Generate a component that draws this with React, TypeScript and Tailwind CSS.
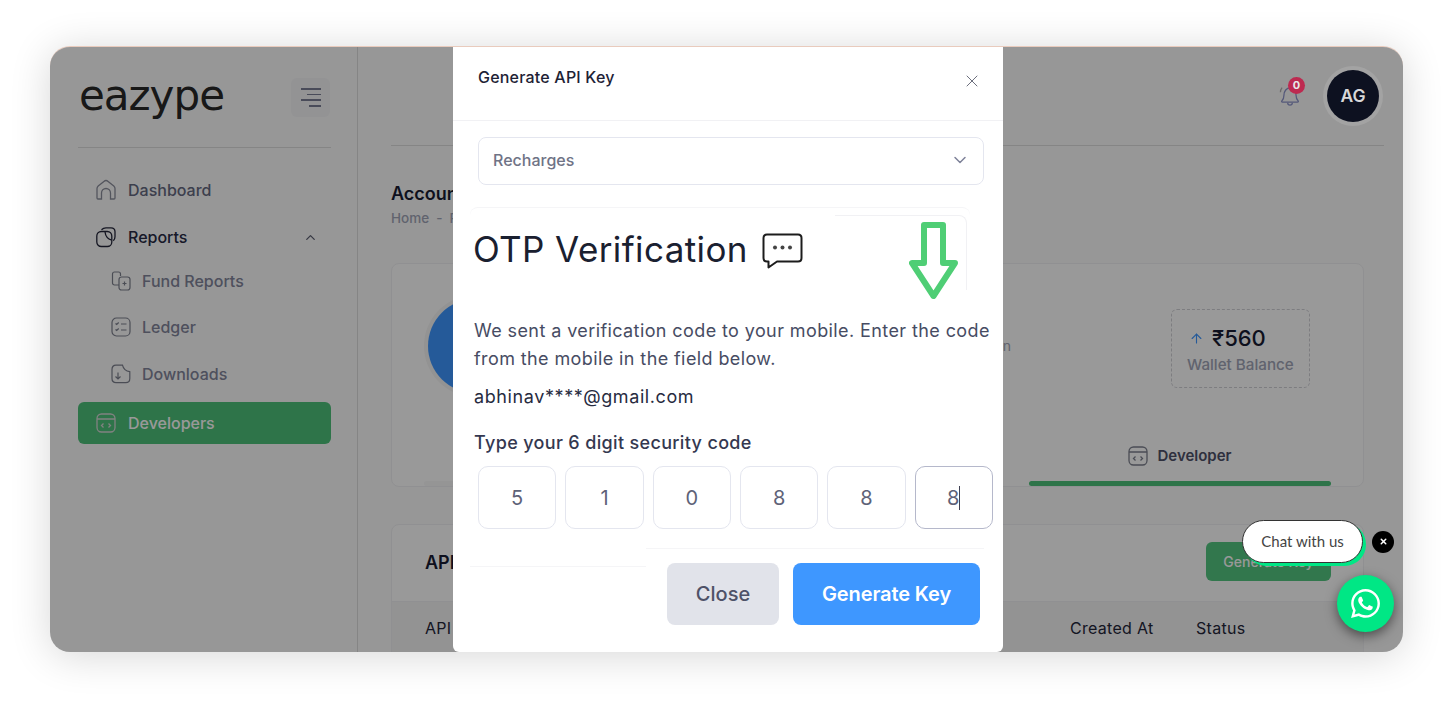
import { ChevronDown, ChevronUp, X, ArrowUp } from 'lucide-react';
import { FaWhatsapp } from 'react-icons/fa';

const HomeIcon = () => (
  <svg width="22" height="22" viewBox="0 0 22 22" fill="none" stroke="#8b8e9c" strokeWidth="1.3">
    <path d="M2 19V9.600c0-1 .4-1.900 1.200-2.600l5.700-4.600c1.200-1 3-1 4.200 0L18.800 7c.8.7 1.200 1.600 1.200 2.600V19c0 .6-.4 1-1 1h-3.500V14a4.500 4.500 0 0 0-9 0v6H3c-.6 0-1-.4-1-1z" />
  </svg>
);

const ReportsIcon = () => (
  <svg width="22" height="22" viewBox="0 0 22 22" fill="none" stroke="#24263a" strokeWidth="1.3">
    <path d="M6.500 3.800C7.800 2.400 9.300 1.800 11 1.800h5c2.400 0 4 1.600 4 4v5c0 1.700-.6 3-1.700 4" />
    <rect x="1.800" y="5.500" width="15" height="15" rx="4.500" />
    <path d="M10 5.800c.4 4.200 3 7.300 6.700 8.300" />
  </svg>
);

const FundIcon = () => (
  <svg width="20" height="20" viewBox="0 0 20 20" fill="none" stroke="#7d808e" strokeWidth="1.2">
    <path d="M8 14H3.500C2.300 14 1.500 13.200 1.500 12V3C1.500 1.800 2.300 1 3.500 1h4C8.700 1 9.500 1.800 9.500 3v2" />
    <rect x="8" y="6" width="11" height="13" rx="2.500" />
    <path d="M13.500 10.500v4M11.500 12.500h4" />
  </svg>
);

const LedgerIcon = () => (
  <svg width="20" height="20" viewBox="0 0 20 20" fill="none" stroke="#7d808e" strokeWidth="1.2">
    <rect x="1" y="1" width="18" height="18" rx="4.500" />
    <path d="M4.500 6.500l1.200 1 2-2M4.500 12.500l1.200 1 2-2M10 7h5.500M10 13h5.500" />
  </svg>
);

const DownloadIcon = () => (
  <svg width="20" height="20" viewBox="0 0 20 20" fill="none" stroke="#7d808e" strokeWidth="1.2">
    <path d="M5 1.200h6.500c.8 3.500 3.500 6 7.300 6.500v6.800c0 2.500-1.600 4.200-4 4.200H5c-2.400 0-4-1.700-4-4.200V5.400c0-2.500 1.600-4.200 4-4.200z" />
    <path d="M7 8.500v6.500M4.500 12.500L7 15l2.500-2.500" />
  </svg>
);

const CodeIcon = ({ color }: { color: string }) => (
  <svg width="20" height="20" viewBox="0 0 20 20" fill="none" stroke={color} strokeWidth="1.3">
    <rect x="1" y="1" width="18" height="18" rx="4.500" />
    <path d="M1 6h18M7.500 10.500L5.500 12.500l2 2M12.500 10.500l2 2-2 2" />
  </svg>
);

const BellIcon = () => (
  <svg width="28" height="28" viewBox="0 0 24 24" fill="none" stroke="#55597a" strokeWidth="1.1">
    <path d="M5 18c1.300-1.300 1.800-2.500 1.800-5 0-3.400 2.300-6.300 5.200-6.300s5.200 2.900 5.200 6.300c0 2.500.5 3.700 1.800 5 .4.500.1 1-.5 1H5.500c-.6 0-.9-.5-.5-1z" />
    <path d="M10 19.500c0 1.100.9 2 2 2s2-.9 2-2" />
    <path d="M3.800 10.500c0-1.500.5-2.900 1.400-4" stroke="#6b6b6b" />
  </svg>
);

const OtpBubble = () => (
  <svg width="41" height="36" viewBox="0 0 41 36">
    <path
      d="M5 1.500h31c2 0 3.500 1.500 3.500 3.500v20c0 2-1.500 3.500-3.500 3.500H15L6.500 34.500V28.500H5c-2 0-3.500-1.500-3.500-3.500V5C1.500 3 3 1.500 5 1.500z"
      fill="white"
      stroke="#1c1c1c"
      strokeWidth="2"
      strokeLinejoin="round"
    />
    <circle cx="13" cy="14.500" r="2" fill="#444" />
    <circle cx="20.500" cy="14.500" r="2" fill="#444" />
    <circle cx="28" cy="14.500" r="2" fill="#444" />
  </svg>
);

const GreenArrow = () => (
  <svg width="49" height="77" viewBox="0 0 49 77" fill="none" stroke="#4fce75" strokeWidth="6" strokeLinejoin="round">
    <path d="M15 3h19v38h12L24.500 74 3 41h12z" />
  </svg>
);

const subItems = [
  { label: 'Fund Reports', icon: <FundIcon />, margin: 'mt-[5px]' },
  { label: 'Ledger', icon: <LedgerIcon />, margin: 'mt-[10px]' },
  { label: 'Downloads', icon: <DownloadIcon />, margin: 'mt-[11px]' }
];

const digits = ['5', '1', '0', '8', '8'];

export default function App() {
  return (
    <div className="h-[704px] w-[1453px] overflow-hidden bg-white px-[50px] pt-[46px] font-['Inter','Liberation_Sans',sans-serif]">
      <div className="relative flex h-[606px] overflow-hidden rounded-[20px] border-t border-[#e9cbbd] bg-[#fcfcfc] shadow-[0_4px_40px_rgba(0,0,0,0.16)]">
        {/* sidebar */}
        <aside className="w-[308px] shrink-0 border-r border-[#dedede] pl-[28px] pr-[26px]">
          <div className="flex h-[101px] items-start justify-between border-b border-[#dedede] pt-[31px]">
            <span className="ml-[1px] mt-[-10px] font-['DejaVu_Sans',sans-serif] text-[42px] leading-[56px] tracking-[-1px] text-[#282828]">eazype</span>
            <div className="mr-[1px] flex h-[39px] w-[39px] flex-col items-end justify-center gap-[4px] rounded-md bg-[#f5f5f7] pr-[9px]">
              <span className="h-[1.5px] w-[20px] bg-[#7b7e95]" />
              <span className="h-[1.5px] w-[14px] bg-[#7b7e95]" />
              <span className="h-[1.5px] w-[20px] bg-[#7b7e95]" />
              <span className="h-[2px] w-[12px] bg-[#7b7e95]" />
            </div>
          </div>
          <nav className="mt-[21px]">
            <div className="flex h-[42px] items-center gap-[11px] pl-[17px] text-[16px] font-medium text-[#656981]">
              <HomeIcon />
              Dashboard
            </div>
            <div className="mt-[5px] flex h-[42px] items-center gap-[11px] pl-[17px] text-[16px] font-medium text-[#272a45]">
              <ReportsIcon />
              Reports
              <ChevronUp size={15} strokeWidth={2} className="ml-auto mr-[13px] text-[#5a5d70]" />
            </div>
            {subItems.map(item => (
              <div key={item.label} className={`${item.margin} flex h-[36px] items-center gap-[11px] pl-[33px] text-[16px] font-medium text-[#82859b]`}>
                {item.icon}
                {item.label}
              </div>
            ))}
            <div className="mt-[10px] flex h-[42px] items-center gap-[12px] rounded-md bg-[#4dc17a] pl-[18px] text-[16px] font-medium text-white">
              <CodeIcon color="#d8d8d8" />
              Developers
            </div>
          </nav>
        </aside>

        {/* main content, sits under the overlay */}
        <main className="min-w-0 flex-1 pl-[33px] pr-[19px]">
          <header className="flex h-[99px] items-center justify-end border-b border-[#dedede] pr-[5px]">
            <div className="relative z-10 mr-[23px] mt-[-4px]">
              <BellIcon />
              <span className="absolute left-[12px] top-[-3px] flex h-[17px] w-[17px] items-center justify-center rounded-full bg-[#bd2a50] text-[11px] font-bold text-[#e8e8e8]">0</span>
            </div>
            <div className="relative z-10 flex h-[52px] w-[52px] items-center justify-center rounded-full bg-[#0d1120] text-[17.5px] font-semibold text-[#d8d8d8] ring-[4px] ring-[#a3a3a3]">
              AG
            </div>
          </header>
          <div className="mr-[20px]">
            <h1 className="mt-[36px] text-[18px] font-semibold leading-[24px] text-[#181c32]">Account Overview</h1>
            <p className="mt-[3px] text-[13.5px] font-medium leading-[18px] text-[#a1a5b7]">
              Home<span className="mx-[7px]">-</span>Profile
            </p>

            <section className="mt-[36px] flex h-[224px] flex-col rounded-lg border border-[#f1f1f4] bg-white">
              <div className="flex items-start pl-[36px] pr-[53px] pt-[35px]">
                <div className="h-[94px] w-[94px] shrink-0 rounded-full bg-[#3e97ff] ring-[4px] ring-[#f5f5f5]" />
                <span className="ml-auto mr-[160px] mt-[37px] text-[14px] leading-[20px] text-[#a1a5b7]">n</span>
                <div className="mt-[10px] h-[79px] w-[139px] rounded-md border border-dashed border-[#d0d0d6] pl-[15px] pt-[12px]">
                  <div className="flex items-center gap-[8px] pl-[2px] text-[22px] font-medium leading-[32px] text-[#181c32]">
                    <ArrowUp size={15} strokeWidth={1.8} className="text-[#3e97ff]" />
                    ₹560
                  </div>
                  <div className="mt-[1px] text-[15.2px] font-medium leading-[20px] text-[#a1a5b7]">Wallet Balance</div>
                </div>
              </div>
              <div className="mt-auto flex justify-between pl-[32px] pr-[32px]">
                <div className="flex w-[302px] flex-col">
                  <div className="h-[40px]" />
                  <div className="h-[5px] rounded bg-[#f8f8f9]" />
                </div>
                <div className="flex w-[302px] flex-col">
                  <div className="flex h-[40px] items-start justify-center gap-[9px] pt-[5px] text-[15px] font-semibold leading-[20px] text-[#4e5068]">
                    <CodeIcon color="#7d808e" />
                    Developer
                  </div>
                  <div className="h-[5px] rounded bg-[#4dc17a]" />
                </div>
              </div>
            </section>

            <section className="mt-[37px] rounded-lg border border-[#f1f1f4] bg-white">
              <div className="flex h-[77px] items-start justify-between border-b border-[#f1f1f4] pl-[33px] pr-[32px] pt-[17px]">
                <h2 className="mt-[1px] text-[18px] font-semibold leading-[39px] text-[#181c32]">API Keys</h2>
                <div className="flex h-[39px] w-[125px] items-center justify-center rounded-md bg-[#54c681] text-[14px] font-medium text-white">Generate Key</div>
              </div>
              <div className="flex h-[60px] items-start bg-[#f5f5f5] pl-[33px] pt-[14px] text-[16px] leading-[24px] tracking-[0.3px] text-[#24263a]">
                <span className="w-[645px]">API Key</span>
                <span className="w-[126px]">Created At</span>
                <span>Status</span>
              </div>
            </section>
          </div>
        </main>

        {/* dim layer */}
        <div className="absolute inset-0 bg-black/40" />

        {/* modal */}
        <div className="absolute bottom-0 left-[403px] top-0 z-20 w-[550px] rounded-b-md bg-white text-[#3f4460]">
          <div className="flex h-[74px] items-start justify-between border-b border-[#f1f1f4] pl-[25px] pr-[21px] pt-[19px]">
            <h3 className="text-[16px] font-medium leading-[22px] tracking-[0.2px] text-[#1e2235]">Generate API Key</h3>
            <X size={20} strokeWidth={1.2} className="mt-[5px] text-[#6c6f7d]" />
          </div>

          <div className="mx-[25px] mt-[16px] flex h-[48px] w-[506px] items-center justify-between rounded-lg border border-[#e4e6ef] pb-[2px] pl-[14px] pr-[13px] text-[16px] font-medium text-[#6f7386]">
            Recharges
            <ChevronDown size={20} strokeWidth={1.8} className="text-[#7e8299]" />
          </div>

          <div className="relative">
            <div className="absolute left-[17px] top-[22px] h-[10px] w-[500px] rounded-t-lg border-t border-[#f5f5f7]" />
            <div className="absolute left-[382px] top-[30px] h-[75px] w-[132px] rounded-tr-lg border-r border-t border-[#f1f1f4]" />
            <div className="absolute left-[456px] top-[37px]">
              <GreenArrow />
            </div>

            <div className="flex items-center pl-[20px] pt-[44px]">
              <span className="text-[35px] leading-[40px] tracking-[0.4px] text-[#1a2030]">OTP Verification</span>
              <span className="ml-[14px] mt-[3px] flex">
                <OtpBubble />
              </span>
            </div>
            <p className="mt-[48px] pl-[21px] text-[18px] leading-[28px] tracking-[0.4px] text-[#474c63]">
              We sent a verification code to your mobile. Enter the code
              <br />
              from the mobile in the field below.
            </p>
            <p className="mt-[12px] pl-[21px] text-[18px] leading-[24px] tracking-[0.6px] text-[#272b3f]">abhinav****@gmail.com</p>
            <p className="mt-[22px] pl-[21px] text-[18px] font-medium leading-[24px] tracking-[0.34px] text-[#343850]">Type your 6 digit security code</p>

            <div className="ml-[25px] mt-[11px] flex w-[515px] gap-[9px]">
              {digits.map((digit, index) => (
                <div key={index} className="flex h-[63px] flex-1 items-center justify-center rounded-[10px] border border-[#e4e6ef] text-[20px] text-[#5e6278]">
                  {digit}
                </div>
              ))}
              <div className="flex h-[63px] flex-1 items-center justify-center rounded-[10px] border border-[#b5b8cb] text-[20px] text-[#5e6278]">
                8
                <span className="h-[24px] w-px bg-[#3f4254]" />
              </div>
            </div>

            <div className="absolute bottom-[76px] left-[193px] h-px w-[338px] bg-[#f5f5f7]" />
            <div className="absolute bottom-[58px] left-[17px] h-px w-[176px] bg-[#f5f5f7]" />

            <div className="mr-[23px] mt-[34px] flex justify-end gap-[14px]">
              <div className="flex h-[62px] w-[112px] items-center justify-center rounded-lg bg-[#e1e3ea] text-[20px] font-medium text-[#4e5268]">Close</div>
              <div className="flex h-[62px] w-[187px] items-center justify-center rounded-lg bg-[#3e97ff] text-[20px] font-semibold tracking-[-0.1px] text-white">Generate Key</div>
            </div>
          </div>
        </div>

        {/* chat widget */}
        <div className="absolute bottom-[20px] right-[9px] z-20 flex flex-col items-end">
          <div className="flex items-center gap-[9px]">
            <div className="flex h-[43px] w-[121px] items-center justify-center rounded-[22px] border border-[#333] bg-white font-['Lato',sans-serif] text-[15px] text-[#444] shadow-[3px_3px_0_#00e785]">
              Chat with us
            </div>
            <div className="flex h-[22px] w-[22px] items-center justify-center rounded-full bg-black text-white">
              <X size={9} strokeWidth={4} />
            </div>
          </div>
          <div className="mt-[12px] flex h-[57px] w-[57px] items-center justify-center rounded-full bg-[#00e785] text-white shadow-[0_4px_12px_rgba(0,0,0,0.5)]">
            <FaWhatsapp size={33} />
          </div>
        </div>
      </div>
    </div>
  );
}
